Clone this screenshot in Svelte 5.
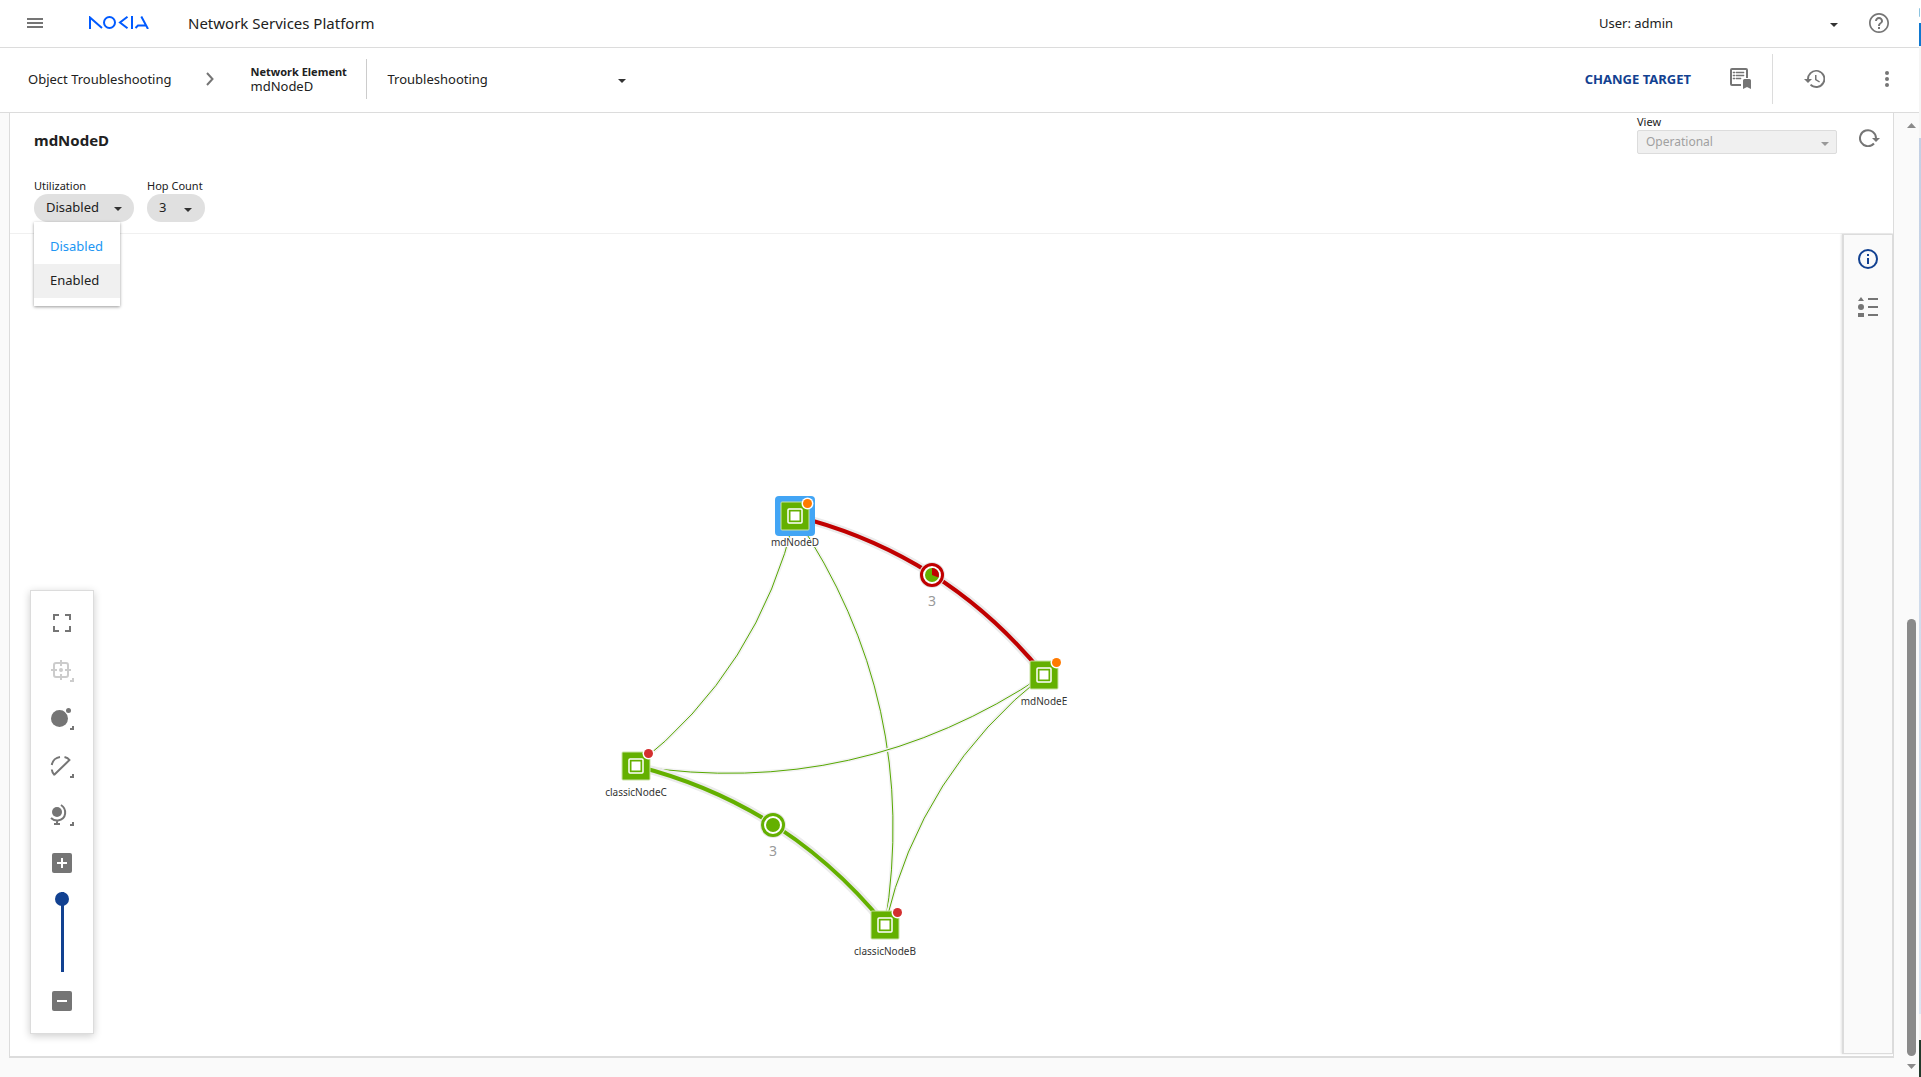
<script>
	const nodes = [
		{ name: "mdNodeD", x: 785, y: 282, alarm: "#ff7a00", selected: true },
		{ name: "mdNodeE", x: 1034, y: 441, alarm: "#ff7a00" },
		{ name: "classicNodeC", x: 626, y: 532, alarm: "#d32f2f" },
		{ name: "classicNodeB", x: 875, y: 691, alarm: "#d32f2f" }
	]

	const links = [
		"M785 282 Q749 435 626 532",
		"M785 282 Q911 468 875 691",
		"M1034 441 Q847 566 626 532",
		"M1034 441 Q911 538 875 691"
	]

	const groups = [
		{ d: "M785 282 Q936 320 1034 441", x: 922, y: 341, color: "#c00000", count: 3, down: true },
		{ d: "M626 532 Q777 570 875 691", x: 763, y: 591, color: "#64b000", count: 3 }
	]

	const options = ["Disabled", "Enabled"]

	let utilization = $state("Disabled")
	let menuOpen = $state(true)
	let zoom = $state(100)

	function pick(option) {
		utilization = option
		menuOpen = false
	}
</script>

{#snippet corner()}
	<path d="M24 19v4h-4v-2h2v-2z" />
{/snippet}

<div class="window">
	<div class="app">
		<header class="topbar">
			<button class="icon menu" aria-label="Menu">
				<svg width="16" height="12" viewBox="0 0 16 12"><path d="M0 1h16v2H0zM0 5h16v2H0zM0 9h16v2H0z" /></svg>
			</button>
			<a class="logo" href="#home" aria-label="Nokia">
				<svg width="60" height="13" viewBox="0 0 60 13">
					<g fill="none" stroke="#005aff" stroke-width="2">
						<path d="M1 13V1.500L13 12" />
						<circle cx="20.500" cy="6.500" r="5.500" />
						<path d="M38.500 .8 31 6.500l7.500 5.700" />
						<path d="M43 0v13" />
						<path d="M52.300 .5 59 13M46.500 12 49 9.500h8" />
					</g>
				</svg>
			</a>
			<span class="product">Network Services Platform</span>
			<div class="dropdown user">
				<select aria-label="User">
					<option>User: admin</option>
				</select>
				<svg class="caret" width="8" height="4" viewBox="0 0 8 4"><path d="M0 0h8L4 4z" /></svg>
			</div>
			<button class="icon help" aria-label="Help">
				<svg width="20" height="20" viewBox="2 2 20 20"><path d="M11 18h2v-2h-2v2zm1-16C6.480 2 2 6.480 2 12s4.480 10 10 10 10-4.480 10-10S17.520 2 12 2zm0 18.300c-4.600 0-8.300-3.700-8.300-8.300S7.400 3.700 12 3.700s8.300 3.700 8.300 8.300-3.700 8.300-8.300 8.300zM12 6c-2.210 0-4 1.790-4 4h2c0-1.100.9-2 2-2s2 .9 2 2c0 2-3 1.750-3 5h2c0-2.250 3-2.500 3-5 0-2.210-1.790-4-4-4z" /></svg>
			</button>
		</header>

		<nav class="crumbs">
			<a href="#troubleshooting">Object Troubleshooting</a>
			<svg class="chevron" width="8" height="14" viewBox="0 0 8 14"><path d="m1 1 5.500 6L1 13" fill="none" stroke="#757575" stroke-width="2" /></svg>
			<div class="target">
				<strong>Network Element</strong>
				<span>mdNodeD</span>
			</div>
			<div class="dropdown page">
				<select aria-label="Page">
					<option>Troubleshooting</option>
				</select>
				<svg class="caret" width="8" height="4" viewBox="0 0 8 4"><path d="M0 0h8L4 4z" /></svg>
			</div>
			<button class="change">CHANGE TARGET</button>
			<button class="icon report" aria-label="Saved reports">
				<svg width="22" height="22" viewBox="0 0 22 22">
					<path d="M2 0h14a2 2 0 0 1 2 2v8h-2V2H2v14h9v2H2a2 2 0 0 1-2-2V2a2 2 0 0 1 2-2z" />
					<path d="M3 4h2v1H3zM6 4h8v1H6zM3 7h2v1H3zM6 7h8v1H6zM3 10h2v1H3zM6 10h5v1H6z" stroke="#757575" stroke-width=".5" />
					<path d="M13 12.500a1.500 1.500 0 0 1 1.500-1.500h5a1.500 1.500 0 0 1 1.500 1.500V21l-4-2-4 2z" />
				</svg>
			</button>
			<div class="tools">
				<button class="icon" aria-label="History">
					<svg width="21" height="18" viewBox="1 3 21 18"><path d="M13 3a9 9 0 0 0-9 9H1l4 4 4-4H6a7.200 7.200 0 1 1 2.200 5l-1.300 1.300A9 9 0 1 0 13 3zm-1 5v5l4.200 2.600.8-1.200-3.500-2.100V8z" /></svg>
				</button>
				<button class="icon" aria-label="More">
					<svg width="4" height="16" viewBox="0 0 4 16"><circle cx="2" cy="2" r="2" /><circle cx="2" cy="8" r="2" /><circle cx="2" cy="14" r="2" /></svg>
				</button>
			</div>
		</nav>

		<div class="workspace">
			<main class="panel">
				<section class="panel-head">
					<div class="title-row">
						<h1>mdNodeD</h1>
						<div class="view">
							<label for="view">View</label>
							<div class="dropdown">
								<select id="view" disabled>
									<option>Operational</option>
								</select>
								<svg class="caret" width="8" height="4" viewBox="0 0 8 4"><path d="M0 0h8L4 4z" /></svg>
							</div>
						</div>
						<button class="icon refresh" aria-label="Refresh">
							<svg width="21" height="18" viewBox="0 0 21 18">
								<path d="M15 14.500A8 8 0 1 1 17 9" fill="none" stroke="#757575" stroke-width="2" />
								<path d="M13 9h8l-4 4z" />
							</svg>
						</button>
					</div>
					<div class="filters">
						<div class="filter">
							<span id="util-label">Utilization</span>
							<button class="pill" aria-haspopup="listbox" aria-expanded={menuOpen} aria-labelledby="util-label" onclick={() => (menuOpen = !menuOpen)}>
								{utilization}
								<svg width="8" height="4" viewBox="0 0 8 4"><path d="M0 0h8L4 4z" /></svg>
							</button>
							{#if menuOpen}
								<div class="options" role="listbox" aria-labelledby="util-label">
									{#each options as option}
										<button
											role="option"
											aria-selected={option === utilization}
											class:current={option === utilization}
											class:hovered={option !== utilization}
											onclick={() => pick(option)}
										>{option}</button>
									{/each}
								</div>
							{/if}
						</div>
						<div class="filter">
							<label for="hops">Hop Count</label>
							<div class="dropdown">
								<select id="hops" class="pill hops">
									<option>3</option>
								</select>
								<svg class="caret" width="8" height="4" viewBox="0 0 8 4"><path d="M0 0h8L4 4z" /></svg>
							</div>
						</div>
					</div>
				</section>

				<section class="map">
					<div class="canvas">
						<svg class="graph" role="img" aria-label="Topology">
							{#each links as d}
								<path class="halo thin" {d} />
								<path class="link" {d} />
							{/each}
							{#each groups as g}
								<path class="halo" d={g.d} />
								<path class="bundle" d={g.d} stroke={g.color} />
								<circle cx={g.x} cy={g.y} r="13" fill="#e6e6e6" />
								<circle cx={g.x} cy={g.y} r="10.500" fill="#fff" stroke={g.color} stroke-width="3" />
								<circle cx={g.x} cy={g.y} r="7" fill="#64b000" />
								{#if g.down}
									<path d="M{g.x} {g.y}v-7a7 7 0 0 1 6.500 9.500z" fill={g.color} />
								{/if}
								<text class="count" x={g.x} y={g.y + 31}>{g.count}</text>
							{/each}
							{#each nodes as n}
								<g transform="translate({n.x} {n.y})">
									{#if n.selected}
										<rect x="-20" y="-20" width="40" height="40" rx="4" fill="#42a5f5" />
									{/if}
									<rect x="-14" y="-14" width="28" height="28" rx="1" fill="#64b000" stroke="#c9e3a4" stroke-width="1" />
									<rect x="-7" y="-7" width="14" height="14" rx="1" fill="#64b000" stroke="#fff" stroke-width="1.500" />
									<rect x="-4.500" y="-4.500" width="9" height="9" fill="#fff" />
									<circle cx="12.500" cy="-12.500" r="6" fill="#fff" />
									<circle cx="12.500" cy="-12.500" r="4.500" fill={n.alarm} />
									<text class="name" y="30">{n.name}</text>
								</g>
							{/each}
						</svg>

						<div class="toolbox">
							<button class="icon" aria-label="Fit to screen">
								<svg width="18" height="18" viewBox="0 0 18 18"><path d="M0 0h6v2H2v4H0zM12 0h6v6h-2V2h-4zM0 12h2v4h4v2H0zM16 12h2v6h-6v-2h4z" /></svg>
							</button>
							<button class="icon" aria-label="Center on selection" disabled>
								<svg width="24" height="24" viewBox="0 0 24 24">
									<g fill="none" stroke="currentColor" stroke-width="2"><rect x="4" y="4" width="14" height="14" rx="2" /><path d="M11 1v6M11 15v6M1 11h6M15 11h6" /></g>
									<circle cx="11" cy="11" r="2" />
									{@render corner()}
								</svg>
							</button>
							<button class="icon" aria-label="Node display">
								<svg width="24" height="24" viewBox="0 0 24 24">
									<circle cx="9.500" cy="11.500" r="8.500" />
									<circle cx="18.500" cy="3.500" r="3.500" fill="#fff" />
									<circle cx="18.500" cy="3.500" r="2.500" />
									{@render corner()}
								</svg>
							</button>
							<button class="icon" aria-label="Link display">
								<svg width="24" height="24" viewBox="0 0 24 24">
									<g fill="none" stroke="currentColor" stroke-width="2"><path d="M4 20 19.500 5C18 3 16.500 2.500 14.500 2M10 2C6 2.500 2.500 5.500 1.800 10M1.800 14.500C2 17 3 18.500 4.500 20" /></g>
									{@render corner()}
								</svg>
							</button>
							<button class="icon" aria-label="Map background">
								<svg width="24" height="24" viewBox="0 0 24 24">
									<circle cx="7" cy="9" r="5" />
									<g fill="none" stroke="currentColor" stroke-width="2"><path d="M11 2c6 4 6 14-3 15.500C5 17.700 3 17 1 15M7 17v4M4 21h6" /></g>
									{@render corner()}
								</svg>
							</button>
							<button class="icon" aria-label="Zoom in">
								<svg width="20" height="20" viewBox="0 0 20 20"><rect width="20" height="20" rx="2" /><path d="M5 10h10M10 5v10" stroke="#fff" stroke-width="2" /></svg>
							</button>
							<div class="slider">
								<input type="range" aria-label="Zoom" min="0" max="100" bind:value={zoom} />
							</div>
							<button class="icon" aria-label="Zoom out">
								<svg width="20" height="20" viewBox="0 0 20 20"><rect width="20" height="20" rx="2" /><path d="M5 10h10" stroke="#fff" stroke-width="2" /></svg>
							</button>
						</div>
					</div>

					<aside class="side">
						<button class="icon info" aria-label="Info">
							<svg width="20" height="20" viewBox="0 0 20 20"><circle cx="10" cy="10" r="9" fill="none" stroke="currentColor" stroke-width="2" /><path d="M9 5h2v2H9zM9 9h2v6H9z" /></svg>
						</button>
						<button class="icon" aria-label="Legend">
							<svg width="20" height="20" viewBox="0 0 20 20"><path d="m3 0 3 4H0zM0 16h6v4H0zM10 1h10v2H10zM10 9h10v2H10zM10 17h10v2H10z" /><circle cx="3" cy="10" r="3" /></svg>
						</button>
					</aside>
				</section>
			</main>

			<div class="scrollbar" aria-hidden="true">
				<svg width="9" height="5" viewBox="0 0 9 5"><path d="M0 5h9L4.500 0z" /></svg>
				<div class="track"><div class="thumb"></div></div>
				<svg width="9" height="5" viewBox="0 0 9 5"><path d="M0 0h9L4.500 5z" /></svg>
			</div>
		</div>
	</div>
	<div class="edge" aria-hidden="true">
		<i class="ring"></i>
		<i class="accent"></i>
		<i class="pale"></i>
		<i class="sky"></i>
		<i class="status"></i>
		<i class="dark"></i>
	</div>
</div>

<style>
	:global(body) {
		margin: 0;
		background: #fff;
	}

	.window {
		display: flex;
		min-height: 100vh;
		font-family: "Noto Sans", "Open Sans", sans-serif;
		font-size: 13px;
		color: #212121;
	}

	.window * {
		box-sizing: border-box;
	}

	.app {
		flex: 1;
		min-width: 0;
		display: flex;
		flex-direction: column;
	}

	button,
	select {
		font: inherit;
		color: inherit;
		border: 0;
		padding: 0;
		margin: 0;
		background: none;
		cursor: pointer;
	}

	select {
		appearance: none;
		width: 100%;
		outline: none;
	}

	a {
		color: inherit;
		text-decoration: none;
	}

	svg {
		display: block;
		flex: none;
		fill: currentColor;
	}

	.icon {
		display: flex;
		align-items: center;
		justify-content: center;
		color: #757575;
	}

	.dropdown {
		position: relative;
	}

	.caret {
		position: absolute;
		right: 8px;
		top: 50%;
		color: #333;
		pointer-events: none;
	}

	.topbar {
		display: flex;
		align-items: center;
		height: 48px;
		padding-bottom: 2px;
		border-bottom: 1px solid #dcdcdc;
		background: #fff;
	}

	.menu {
		width: 70px;
		height: 40px;
	}

	.logo {
		margin: 0 39px 0 19px;
	}

	.product {
		font-size: 15px;
	}

	.user {
		width: 247px;
		margin-left: auto;
	}

	.help {
		margin: 0 30px 0 23px;
	}

	.crumbs {
		display: flex;
		align-items: center;
		height: 65px;
		padding: 0 0 2px 28px;
		border-bottom: 1px solid #dcdcdc;
		background: #fff;
	}

	.chevron {
		margin: 0 36px 0 35px;
	}

	.target {
		display: flex;
		flex-direction: column;
		justify-content: center;
		width: 117px;
		height: 40px;
		border-right: 1px solid #ccc;
		line-height: 14px;
		white-space: nowrap;
	}

	.target strong {
		font-size: 11px;
	}

	.page {
		width: 247px;
		margin-left: 20px;
	}

	.change {
		margin-left: auto;
		font-size: 13px;
		font-weight: 700;
		color: #124191;
	}

	.report {
		margin: 0 20px 0 39px;
	}

	.tools {
		display: flex;
		align-items: center;
		justify-content: space-between;
		width: 147px;
		height: 50px;
		padding: 0 30px 0 31px;
		border-left: 1px solid #dcdcdc;
	}

	.workspace {
		flex: 1;
		display: flex;
		background: #fafafa;
	}

	.panel {
		flex: 1;
		min-width: 0;
		display: flex;
		flex-direction: column;
		margin: 0 9px 19px;
		border: solid #dcdcdc;
		border-width: 0 1px 2px;
		background: #fff;
	}

	.panel-head {
		height: 121px;
		padding: 0 13px 0 24px;
		border-bottom: 1px solid #f0f0f0;
	}

	.title-row {
		display: flex;
		align-items: flex-start;
		height: 64px;
	}

	h1 {
		margin: 16px auto 0 0;
		font-size: 15px;
		line-height: 22px;
		font-weight: 700;
	}

	.view {
		width: 200px;
		font-size: 12px;
	}

	label,
	.filter > span {
		display: block;
		font-size: 11px;
		line-height: 17px;
	}

	.view select {
		height: 24px;
		padding: 0 0 1px 8px;
		border: 1px solid #dcdcdc;
		border-radius: 2px;
		background: #f0f0f0;
		color: #a0a0a0;
		opacity: 1;
	}

	.view .caret {
		color: #999;
	}

	.refresh {
		margin: 16px 0 0 22px;
	}

	.filters {
		display: flex;
		gap: 13px;
	}

	.filter {
		position: relative;
	}

	.pill {
		display: flex;
		align-items: center;
		justify-content: space-between;
		width: 100px;
		height: 28px;
		padding: 0 12px 2px;
		border-radius: 14px;
		background: #e0e0e0;
	}

	.pill svg {
		color: #333;
		margin-top: 3px;
	}

	.hops {
		width: 58px;
	}

	.hops + .caret {
		right: 13px;
	}

	.options {
		position: absolute;
		top: 100%;
		left: 0;
		z-index: 2;
		width: 86px;
		padding: 8px 0;
		background: #fff;
		box-shadow: 0 1px 3px rgba(0, 0, 0, 0.4);
	}

	.options button {
		display: block;
		width: 100%;
		height: 34px;
		padding: 0 0 2px 16px;
		text-align: left;
	}

	.options .current {
		color: #2196f3;
	}

	.options .hovered {
		background: #f0f0f0;
	}

	.map {
		flex: 1;
		display: flex;
	}

	.canvas {
		flex: 1;
		position: relative;
		min-height: 780px;
		overflow: hidden;
	}

	.graph {
		position: absolute;
		width: 100%;
		height: 100%;
	}

	.graph path.halo {
		fill: none;
		stroke: #ebebeb;
		stroke-width: 9px;
	}

	.graph path.thin {
		stroke: #f3f3f3;
		stroke-width: 4px;
	}

	.link {
		fill: none;
		stroke: #56a800;
		stroke-width: 1px;
	}

	.bundle {
		fill: none;
		stroke-width: 4px;
	}

	.count {
		font-size: 14px;
		fill: #999;
		text-anchor: middle;
	}

	.name {
		font-size: 10px;
		fill: #333;
		text-anchor: middle;
		paint-order: stroke;
		stroke: #fff;
		stroke-width: 2px;
	}

	.toolbox {
		position: absolute;
		left: 20px;
		bottom: 22px;
		width: 64px;
		padding: 8px 0;
		border: 1px solid #dcdcdc;
		background: #fff;
		box-shadow: 0 2px 8px rgba(0, 0, 0, 0.2);
	}

	.toolbox .icon {
		width: 100%;
		height: 48px;
	}

	.toolbox .icon:disabled {
		color: #ccc;
	}

	.slider {
		display: flex;
		justify-content: center;
		height: 90px;
		padding: 5px 0;
	}

	.slider input {
		appearance: none;
		writing-mode: vertical-lr;
		direction: rtl;
		width: 14px;
		height: 80px;
		margin: 0;
		background: linear-gradient(#124191, #124191) center / 3px 100% no-repeat;
	}

	.slider input::-webkit-slider-thumb {
		appearance: none;
		width: 14px;
		height: 14px;
		border-radius: 50%;
		background: #124191;
	}

	.side {
		display: flex;
		flex-direction: column;
		align-items: center;
		width: 51px;
		margin-bottom: 2px;
		border: 1px solid #dcdcdc;
		border-left-width: 2px;
		background: #fafafa;
		box-shadow: -1px 0 2px rgba(0, 0, 0, 0.1);
	}

	.side .icon {
		width: 48px;
		height: 48px;
	}

	.side .info {
		color: #124191;
	}

	.scrollbar {
		display: flex;
		flex-direction: column;
		align-items: center;
		width: 16px;
		padding: 10px 0 8px;
		color: #8a8a8a;
	}

	.track {
		flex: 1;
		display: flex;
		flex-direction: column;
		justify-content: flex-end;
		margin: 8px 0;
	}

	.thumb {
		width: 9px;
		height: 47.5%;
		border-radius: 5px;
		background: #8a8a8a;
	}

	.edge {
		display: flex;
		flex-direction: column;
		width: 2px;
		padding-top: 8px;
	}

	.ring {
		height: 9px;
		margin-bottom: 6px;
		border-left: 1px solid #8cc4e0;
		border-radius: 2px;
	}

	.accent {
		height: 23px;
		background: #0f78d0;
	}

	.pale {
		height: 92px;
		background: #f5f5f5;
	}

	.sky {
		flex: 1;
		background: linear-gradient(#c3d0e4, #dbe6f3);
	}

	.status {
		height: 26px;
		background: #f3f3f3;
	}

	.dark {
		height: 37px;
		background: #223a2c;
	}
</style>
